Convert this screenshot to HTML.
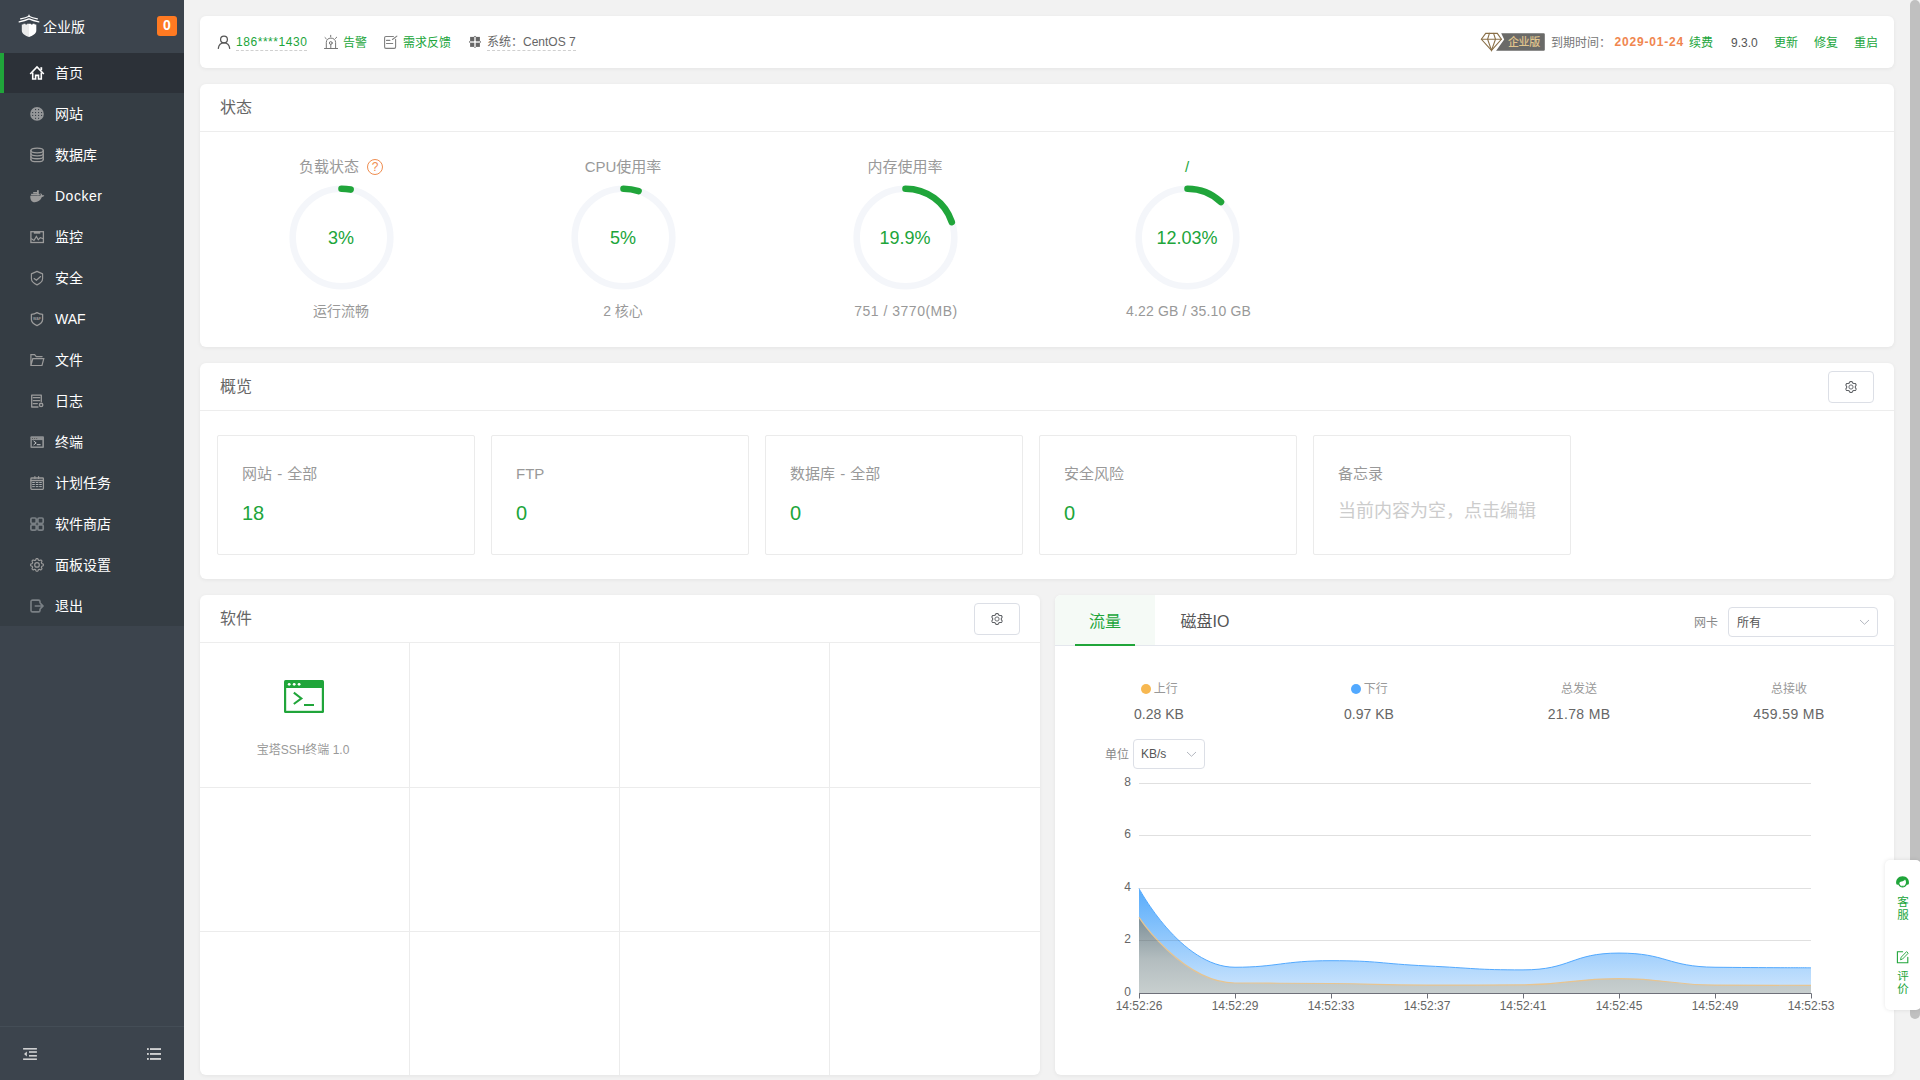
<!DOCTYPE html>
<html lang="zh-CN">
<head>
<meta charset="utf-8">
<title>宝塔Linux面板</title>
<style>
*{box-sizing:border-box;margin:0;padding:0}
html,body{width:1920px;height:1080px;overflow:hidden;background:#f2f2f2;font-family:"Liberation Sans","Noto Sans CJK SC",sans-serif;font-size:12px;color:#666}
#app{position:relative;width:1920px;height:1080px;overflow:hidden}
.abs{position:absolute}
a{color:#20a53a;text-decoration:none}
/* sidebar */
#side{position:absolute;left:0;top:0;width:184px;height:1080px;background:#3c444d}
#side .menu{position:absolute;left:0;top:53px;width:184px;height:573px;background:#353d44}
#side .item{position:absolute;left:0;width:184px;height:40px;line-height:40px;color:#fff;font-size:14px;padding-left:55px;white-space:nowrap}
#side .item.on{background:#2c3138;border-left:4px solid #20a53a;padding-left:51px}
#side .item svg{position:absolute;left:29px;top:12px;width:16px;height:16px}
#side .item.on svg{left:25px}
#side .logo{position:absolute;left:43px;top:17px;font-size:14px;color:#fff;line-height:20px}
#side .badge{position:absolute;left:157px;top:16px;width:20px;height:20px;border-radius:3px;background:#ff7a22;color:#fff;font-weight:bold;font-size:14px;line-height:19px;text-align:center}
#side .sep{position:absolute;left:0;top:1026px;width:184px;height:1px;background:#444d56}
/* cards */
.card{position:absolute;background:#fff;border-radius:6px;box-shadow:0 1px 4px rgba(0,0,0,.06)}
.card .hd{position:absolute;left:0;top:0;right:0;height:48px;border-bottom:1px solid #ededed}
.card .hd .t{position:absolute;left:20px;top:0;line-height:48.5px;font-size:16px;color:#666}
.gearbtn{position:absolute;right:20px;top:8px;width:46px;height:32px;border:1px solid #dcdfe6;border-radius:4px;background:#fff}
.gearbtn svg{position:absolute;left:16px;top:9px;width:12px;height:12px}
/* top bar */
#top{left:200px;top:16px;width:1694px;height:52px}
#top span,#top a{position:absolute;top:18px;line-height:16px;font-size:12px;white-space:nowrap}
.dash{border-bottom:1px dashed #d0d0d0;padding-bottom:0}
#top .c{top:19px}
/* status */
.st-t{position:absolute;top:73px;width:200px;text-align:center;font-size:15px;line-height:20px;color:#999;white-space:nowrap}
.st-v{position:absolute;top:142px;width:200px;text-align:center;font-size:18px;line-height:24px;color:#20a53a;white-space:nowrap}
.st-b{position:absolute;top:217px;width:240px;text-align:center;font-size:14px;line-height:20px;color:#999;white-space:nowrap}
/* overview */
.ov{position:absolute;top:72px;width:258px;height:120px;border:1px solid #ebebeb;border-radius:2px;background:#fff}
.ov .l{position:absolute;left:24px;top:28px;font-size:15px;line-height:20px;color:#999;white-space:nowrap;word-spacing:1px}
.ov .n{position:absolute;left:24px;top:64px;font-size:20px;line-height:26px;color:#20a53a}
/* software grid */
.gl{position:absolute;background:#ececec}
/* chart */
.tab{position:absolute;top:0;width:100px;height:50px;line-height:54px;text-align:center;font-size:16px;color:#555}
.tab.on{background:#f5faf6;color:#20a53a}
.sel{position:absolute;border:1px solid #dcdfe6;border-radius:4px;background:#fff;font-size:12px;color:#555}
.kv-l{position:absolute;top:86px;width:210px;text-align:center;font-size:12px;line-height:16px;color:#999;white-space:nowrap}
.kv-v{position:absolute;top:108.5px;width:210px;text-align:center;font-size:14px;line-height:20px;color:#666;white-space:nowrap}
.dot{display:inline-block;width:10px;height:10px;border-radius:50%;vertical-align:-1px;margin-left:1px;margin-right:2.5px}
</style>
</head>
<body>
<div id="app">

<!-- SIDEBAR -->
<div id="side">
  <div class="logo">企业版</div>
  <div class="badge">0</div>
  <div class="menu"></div>
  <div class="item on" style="top:53px">首页</div>
  <div class="item" style="top:94px">网站</div>
  <div class="item" style="top:135px">数据库</div>
  <div class="item" style="top:176px;letter-spacing:0.5px">Docker</div>
  <div class="item" style="top:217px">监控</div>
  <div class="item" style="top:258px">安全</div>
  <div class="item" style="top:299px">WAF</div>
  <div class="item" style="top:340px">文件</div>
  <div class="item" style="top:381px">日志</div>
  <div class="item" style="top:422px">终端</div>
  <div class="item" style="top:463px">计划任务</div>
  <div class="item" style="top:504px">软件商店</div>
  <div class="item" style="top:545px">面板设置</div>
  <div class="item" style="top:586px">退出</div>
  <div class="sep"></div>
  <svg class="abs" style="left:0;top:0" width="184" height="1080" viewBox="0 0 184 1080" fill="none" stroke-linecap="round" stroke-linejoin="round">
<g><path d="M21.8,24.6 h1.6 v-0.9 h2 v0.9 h1.7 v-0.9 h1.9 v13.3 C25.5,35.8 21.8,34 21.8,30.5 Z" fill="#ebebeb"/><path d="M29,23.7 h1.9 v0.9 h1.7 v-0.9 h2 v0.9 h1.7 V30.5 C36.3,34 32.5,35.8 29,37 Z" fill="#fff"/><path d="M19.2,21.9 C22,21.3 26,20.2 29,18.9 C32,20.2 36,21.3 38.8,21.9" stroke="#fff" stroke-width="1.3"/><path d="M20.6,18.8 C23,18.3 26.5,17.4 29,16.2 C31.5,17.4 35,18.3 37.4,18.8" stroke="#fff" stroke-width="1.2"/><path d="M29,15 V16.6" stroke="#fff" stroke-width="1.2"/></g>
<g stroke="#fff" stroke-width="1.6" stroke-linejoin="miter" stroke-linecap="butt"><path d="M30.2,74 L37,66.9 L43.8,74"/><path d="M32.7,72.6 V79 H35.6 V75.4 H38.5 V79 H41.3 V72.6"/><path d="M41.3,67.2 V70.2" stroke-width="1.8"/></g>
<circle cx="37" cy="113.9" r="6.8" fill="#959799"/><rect x="32.1" y="112.0" width="1.1" height="1.1" fill="#3a4249"/><rect x="32.1" y="114.9" width="1.1" height="1.1" fill="#3a4249"/><rect x="35.0" y="109.0" width="1.1" height="1.1" fill="#3a4249"/><rect x="35.0" y="112.0" width="1.1" height="1.1" fill="#3a4249"/><rect x="35.0" y="114.9" width="1.1" height="1.1" fill="#3a4249"/><rect x="35.0" y="117.8" width="1.1" height="1.1" fill="#3a4249"/><rect x="38.0" y="109.0" width="1.1" height="1.1" fill="#3a4249"/><rect x="38.0" y="112.0" width="1.1" height="1.1" fill="#3a4249"/><rect x="38.0" y="114.9" width="1.1" height="1.1" fill="#3a4249"/><rect x="38.0" y="117.8" width="1.1" height="1.1" fill="#3a4249"/><rect x="41.0" y="112.0" width="1.1" height="1.1" fill="#3a4249"/><rect x="41.0" y="114.9" width="1.1" height="1.1" fill="#3a4249"/>
<g stroke="#9b9b9b" stroke-width="1.3"><ellipse cx="37.1" cy="150.5" rx="6.2" ry="2.3"/><path d="M30.9,150.5 V159.4 M43.3,150.5 V159.4"/><path d="M30.9,153.6 C30.9,156.6 43.3,156.6 43.3,153.6"/><path d="M30.9,156.5 C30.9,159.5 43.3,159.5 43.3,156.5"/><path d="M30.9,159.4 C30.9,162.4 43.3,162.4 43.3,159.4"/></g>
<g fill="#9b9b9b"><path d="M30.3,195.7 H40.4 C40.9,194.6 40.6,193.8 40.2,193.1 C41.6,193.6 42.2,194.6 42.3,195.3 C43,195 43.8,195.2 44.3,195.6 C43.7,196.8 42.7,197.1 41.9,197 C40.6,200.2 38,202.2 34.8,202.2 C31.5,202.2 30.1,199.6 30.3,195.7 Z"/><rect x="31.1" y="193.8" width="8.6" height="1.5"/><rect x="33.2" y="192" width="4" height="1.6"/><rect x="37" y="190.2" width="1.8" height="5"/></g>
<g stroke="#9b9b9b" stroke-width="1.3" stroke-linejoin="miter"><rect x="30.9" y="231.7" width="12.5" height="10.8"/><path d="M33.8,232.8 H40.3" stroke-width="1.8" stroke-linecap="butt"/><path d="M31.5,238.8 L34,240.4 L36.4,236.4 L38.3,239.8 L40.2,237.7 L42.8,238.6" stroke-width="1.1"/></g>
<g stroke="#9b9b9b" stroke-width="1.15"><path d="M37,271.4 L42.6,273.9 V278.6 C42.6,281.6 40,283.6 37,284.9 C34,283.6 31.4,281.6 31.4,278.6 V273.9 Z"/><path d="M34.1,278.5 L36.4,280.3 L40.6,276.5"/></g>
<g stroke="#9b9b9b" stroke-width="1.3"><path d="M37,312.6 C38.8,313.6 40.6,314.2 42.6,314.4 V319.6 C42.6,322.6 40,324.4 37,325.6 C34,324.4 31.4,322.6 31.4,319.6 V314.4 C33.4,314.2 35.2,313.6 37,312.6 Z"/></g><text x="37" y="320" text-anchor="middle" font-family="Liberation Sans, sans-serif" font-weight="bold" font-size="3.6" fill="#9b9b9b">WAF</text>
<g stroke="#9b9b9b" stroke-width="1.2" stroke-linejoin="miter"><path d="M42.1,356.6 H36.3 L34.6,354.6 H30.9 V365.5 H42 L43.8,358.6 H32.8 L31,365.3"/></g>
<g stroke="#9b9b9b" stroke-width="1.3"><path d="M41.3,401.6 V395.2 H31.7 V407 H38"/><path d="M33.2,397.6 H39.8 M33.2,400.6 H39.8 M33.2,403.6 H37.4" stroke-width="1.2"/><circle cx="41.1" cy="404.9" r="1.7" stroke-width="1.4"/></g>
<g><rect x="30.4" y="436.3" width="13.6" height="11.7" rx="1" fill="#8d9092"/><rect x="31.9" y="440.1" width="10.4" height="6.3" fill="#353d44"/><rect x="32" y="438" width="1" height="0.9" fill="#555"/><rect x="34.1" y="438" width="1" height="0.9" fill="#555"/><rect x="36.2" y="438" width="1" height="0.9" fill="#555"/><path d="M33.9,441.2 L36.2,442.9 L33.9,444.7" stroke="#c5c7c8" stroke-width="1"/><path d="M37.2,444.7 H40.2" stroke="#c5c7c8" stroke-width="1"/></g>
<g stroke="#9b9b9b" stroke-width="1.3"><rect x="30.9" y="478" width="12.5" height="11.4" rx="0.8"/><path d="M30.9,480.5 H43.4"/><path d="M34.9,476.6 V478.4 M38.6,476.6 V478.4" stroke-width="1.2"/></g><rect x="32.2" y="482.1" width="2.6" height="0.9" fill="#b4b6b8"/><rect x="32.2" y="484.1" width="2.6" height="0.9" fill="#b4b6b8"/><rect x="32.2" y="486.2" width="2.6" height="0.9" fill="#b4b6b8"/><rect x="35.8" y="482.1" width="2.6" height="0.9" fill="#b4b6b8"/><rect x="35.8" y="484.1" width="2.6" height="0.9" fill="#b4b6b8"/><rect x="35.8" y="486.2" width="2.6" height="0.9" fill="#b4b6b8"/><rect x="39.2" y="482.1" width="2.6" height="0.9" fill="#b4b6b8"/><rect x="39.2" y="484.1" width="2.6" height="0.9" fill="#b4b6b8"/><rect x="39.2" y="486.2" width="2.6" height="0.9" fill="#b4b6b8"/>
<g stroke="#7a8085" stroke-width="1.7"><rect x="30.9" y="518" width="5.3" height="5.3" rx="1.2"/><rect x="37.9" y="518" width="5.3" height="5.3" rx="1.2"/><rect x="30.9" y="524.9" width="5.3" height="5.3" rx="1.2"/><rect x="37.9" y="524.9" width="5.3" height="5.3" rx="1.2"/></g>
<path d="M37.00,558.55 L37.42,558.56 L37.81,558.74 L38.10,559.36 L38.32,559.98 L38.59,560.21 L38.89,560.33 L39.19,560.46 L39.55,560.49 L40.14,560.20 L40.78,559.97 L41.19,560.13 L41.49,560.41 L41.77,560.71 L41.93,561.12 L41.70,561.76 L41.41,562.36 L41.44,562.71 L41.57,563.01 L41.69,563.31 L41.92,563.58 L42.54,563.80 L43.16,564.09 L43.34,564.48 L43.35,564.90 L43.34,565.32 L43.16,565.71 L42.54,566.00 L41.92,566.22 L41.69,566.49 L41.57,566.79 L41.44,567.09 L41.41,567.44 L41.70,568.04 L41.93,568.68 L41.77,569.09 L41.49,569.39 L41.19,569.67 L40.78,569.83 L40.14,569.60 L39.55,569.31 L39.19,569.34 L38.89,569.47 L38.59,569.59 L38.32,569.82 L38.10,570.44 L37.81,571.06 L37.42,571.24 L37.00,571.25 L36.58,571.24 L36.19,571.06 L35.90,570.44 L35.68,569.82 L35.41,569.59 L35.11,569.47 L34.81,569.34 L34.46,569.31 L33.86,569.60 L33.22,569.83 L32.81,569.67 L32.51,569.39 L32.23,569.09 L32.07,568.68 L32.30,568.04 L32.59,567.44 L32.56,567.09 L32.43,566.79 L32.31,566.49 L32.08,566.22 L31.46,566.00 L30.84,565.71 L30.66,565.32 L30.65,564.90 L30.66,564.48 L30.84,564.09 L31.46,563.80 L32.08,563.58 L32.31,563.31 L32.43,563.01 L32.56,562.71 L32.59,562.36 L32.30,561.76 L32.07,561.12 L32.23,560.71 L32.51,560.41 L32.81,560.13 L33.22,559.97 L33.86,560.20 L34.45,560.49 L34.81,560.46 L35.11,560.33 L35.41,560.21 L35.68,559.98 L35.90,559.36 L36.19,558.74 L36.58,558.56Z" stroke="#9b9b9b" stroke-width="1.2"/><circle cx="37" cy="564.9" r="2.3" stroke="#9b9b9b" stroke-width="1.2"/>
<g stroke="#7a8085" stroke-width="1.6"><path d="M40,602.4 V601.6 C40,600.6 39.4,600.1 38.4,600.1 H32.6 C31.6,600.1 31,600.7 31,601.6 V610.4 C31,611.4 31.6,611.9 32.6,611.9 H38.4 C39.4,611.9 40,611.4 40,610.4 V609.6"/><path d="M35.3,606 H42.6 M40.4,603.4 L43.1,606 L40.4,608.6"/></g>
<g fill="#cfd0d1"><rect x="23.1" y="1048" width="13.8" height="1.6"/><rect x="29" y="1051.2" width="7.9" height="1.6"/><rect x="29" y="1055" width="7.9" height="1.6"/><rect x="23.1" y="1058.4" width="13.8" height="1.6"/><path d="M24,1054 L26.9,1051.6 V1056.4 Z"/><rect x="147" y="1048.1" width="1.8" height="1.9"/><rect x="150" y="1048.1" width="11" height="1.9"/><rect x="147" y="1053" width="1.8" height="1.9"/><rect x="150" y="1053" width="11" height="1.9"/><rect x="147" y="1058" width="1.8" height="1.9"/><rect x="150" y="1058" width="11" height="1.9"/></g>
</svg>
</div>

<!-- TOP BAR -->
<div class="card" id="top">
  <svg class="abs" style="left:0;top:0" width="1694" height="52" viewBox="200 16 1694 52" fill="none" stroke-linecap="round" stroke-linejoin="round">
    <g stroke="#555" stroke-width="1.25">
      <circle cx="224" cy="39.4" r="3.4"/>
      <path d="M218.3,48.4 C218.8,44.6 221,42.9 224,42.9 C227,42.9 229.2,44.6 229.7,48.4"/>
    </g>
    <g stroke="#777" stroke-width="1">
      <path d="M326.3,48.5 V42.4 C326.3,39.8 328.3,38.1 330.9,38.1 C333.5,38.1 335.6,39.8 335.6,42.4 V48.5"/>
      <path d="M324.5,48.5 H337.6"/>
      <path d="M330.7,35.3 V36.8 M325,37.6 L326.3,38.8 M336.7,37.2 L335.4,38.5"/>
      <circle cx="330.8" cy="43" r="1.4"/>
      <path d="M330.8,44.4 V48.3"/>
    </g>
    <g stroke="#808080" stroke-width="1.1">
      <path d="M393.4,36.5 H385.9 C385,36.5 384.6,37 384.6,37.8 V47.1 C384.6,47.9 385,48.4 385.9,48.4 H394.3 C395.2,48.4 395.6,47.9 395.6,47.1 V39.4"/>
      <path d="M392.4,39.5 L396.9,36.1"/>
      <path d="M386.5,40.4 H389.9 M386.5,43.5 H392.7"/>
    </g>
    <g fill="#666" stroke="none">
      <rect x="470.1" y="36.9" width="4.1" height="4.1"/><rect x="475.8" y="36.9" width="4.1" height="4.1"/>
      <rect x="470.1" y="42.8" width="4.1" height="4.1"/><rect x="475.8" y="42.8" width="4.1" height="4.1"/>
      <path d="M475,35.7 L476.3,37 H473.7 Z M475,48.1 L476.3,46.8 H473.7 Z M468.9,41.9 L470.2,40.6 V43.2 Z M481.1,41.9 L479.8,40.6 V43.2 Z"/>
      <rect x="474.2" y="36.9" width="1.6" height="10" fill="#c9c9c9"/><rect x="470.1" y="41" width="9.8" height="1.8" fill="#c9c9c9"/>
      <rect x="474.2" y="41" width="1.6" height="1.8" fill="#fff"/>
    </g>
    <g stroke="#8a7048" stroke-width="1.1" stroke-linejoin="miter">
      <path d="M1485.7,33.4 H1497.3 L1501.4,39.3 L1491.5,50.4 L1481.4,39.3 Z"/>
      <path d="M1481.4,39.3 H1501.4"/>
      <path d="M1489.4,33.4 L1487.6,39.3 L1491.5,50.4 L1495.5,39.3 L1493.6,33.4"/>
    </g>
    <path d="M1501.2,33.2 H1543.8 Q1544.8,33.2 1544.8,34.2 V49.8 Q1544.8,50.8 1543.8,50.8 H1496.1 L1504.2,39.4 Z" fill="#6a6a68"/>
  </svg>
  <a class="dash" style="left:36px;letter-spacing:0.55px">186****1430</a>
  <a class="c" style="left:143px">告警</a>
  <a class="c" style="left:203px">需求反馈</a>
  <span class="dash" style="left:287px;color:#666">系统：CentOS 7</span>
  <span style="left:1308px;top:18px;font-size:11px;font-weight:500;color:#e0c48c;letter-spacing:-0.4px">企业版</span>
  <span class="c" style="left:1351px;color:#777">到期时间：</span>
  <span style="left:1414.5px;top:18px;color:#f0864f;font-weight:bold;font-size:12px;letter-spacing:0.8px">2029-01-24</span>
  <a class="c" style="left:1489px">续费</a>
  <span class="c" style="left:1531px;color:#555">9.3.0</span>
  <a class="c" style="left:1574px">更新</a>
  <a class="c" style="left:1614px">修复</a>
  <a class="c" style="left:1654px">重启</a>
</div>

<!-- STATUS -->
<div class="card" style="left:200px;top:84px;width:1694px;height:263px">
  <div class="hd"><div class="t">状态</div></div>
  <svg class="abs" style="left:0;top:0" width="1694" height="263" viewBox="0 0 1694 263"><circle cx="141.5" cy="153.5" r="48.8" fill="none" stroke="#f4f6fa" stroke-width="6.6"/><path d="M141.50,104.70 A48.8,48.8 0 0 1 150.64,105.56" fill="none" stroke="#20a53a" stroke-width="6.6" stroke-linecap="round"/><circle cx="423.5" cy="153.5" r="48.8" fill="none" stroke="#f4f6fa" stroke-width="6.6"/><path d="M423.50,104.70 A48.8,48.8 0 0 1 438.58,107.09" fill="none" stroke="#20a53a" stroke-width="6.6" stroke-linecap="round"/><circle cx="705.5" cy="153.5" r="48.8" fill="none" stroke="#f4f6fa" stroke-width="6.6"/><path d="M705.50,104.70 A48.8,48.8 0 0 1 751.82,138.13" fill="none" stroke="#20a53a" stroke-width="6.6" stroke-linecap="round"/><circle cx="987.5" cy="153.5" r="48.8" fill="none" stroke="#f4f6fa" stroke-width="6.6"/><path d="M987.50,104.70 A48.8,48.8 0 0 1 1020.97,117.99" fill="none" stroke="#20a53a" stroke-width="6.6" stroke-linecap="round"/>
    <circle cx="175" cy="83" r="7.5" fill="none" stroke="#ef8d50" stroke-width="1"/>
  </svg>
  <div class="st-t" style="left:29px;width:200px;text-align:left;padding-left:70px">负载状态</div>
  <div class="abs" style="left:167px;top:74px;width:16px;height:18px;line-height:18px;text-align:center;font-size:12px;color:#ef8d50">?</div>
  <div class="st-t" style="left:323px">CPU使用率</div>
  <div class="st-t" style="left:605px">内存使用率</div>
  <div class="st-t" style="left:887px;color:#20a53a">/</div>
  <div class="st-v" style="left:41px">3%</div>
  <div class="st-v" style="left:323px">5%</div>
  <div class="st-v" style="left:605px">19.9%</div>
  <div class="st-v" style="left:887px">12.03%</div>
  <div class="st-b" style="left:21px">运行流畅</div>
  <div class="st-b" style="left:303px">2 核心</div>
  <div class="st-b" style="left:586px;letter-spacing:0.5px">751 / 3770(MB)</div>
  <div class="st-b" style="left:868.5px;letter-spacing:0.15px">4.22 GB / 35.10 GB</div>

</div>

<!-- OVERVIEW -->
<div class="card" style="left:200px;top:363px;width:1694px;height:216px">
  <div class="hd"><div class="t">概览</div><div class="gearbtn"><svg viewBox="0 0 12 12" fill="none"><path d="M6.00,0.45 L6.36,0.46 L6.72,0.50 L7.04,0.78 L7.28,1.22 L7.47,1.66 L7.66,1.98 L7.92,2.10 L8.18,2.23 L8.42,2.38 L8.65,2.55 L9.02,2.55 L9.50,2.50 L10.00,2.49 L10.40,2.62 L10.61,2.92 L10.81,3.22 L10.98,3.55 L11.13,3.88 L11.04,4.29 L10.78,4.72 L10.49,5.11 L10.31,5.43 L10.34,5.72 L10.35,6.00 L10.34,6.28 L10.31,6.57 L10.49,6.89 L10.78,7.28 L11.04,7.71 L11.13,8.12 L10.98,8.45 L10.81,8.77 L10.61,9.08 L10.40,9.38 L10.00,9.51 L9.50,9.50 L9.02,9.45 L8.65,9.45 L8.42,9.62 L8.18,9.77 L7.92,9.90 L7.66,10.02 L7.47,10.34 L7.28,10.78 L7.04,11.22 L6.72,11.50 L6.36,11.54 L6.00,11.55 L5.64,11.54 L5.28,11.50 L4.96,11.22 L4.72,10.78 L4.53,10.34 L4.34,10.02 L4.08,9.90 L3.83,9.77 L3.58,9.62 L3.35,9.45 L2.98,9.45 L2.50,9.50 L2.00,9.51 L1.60,9.38 L1.39,9.08 L1.19,8.78 L1.02,8.45 L0.87,8.12 L0.96,7.71 L1.22,7.28 L1.51,6.89 L1.69,6.57 L1.66,6.28 L1.65,6.00 L1.66,5.72 L1.69,5.43 L1.51,5.11 L1.22,4.72 L0.96,4.29 L0.87,3.88 L1.02,3.55 L1.19,3.22 L1.39,2.92 L1.60,2.62 L2.00,2.49 L2.50,2.50 L2.98,2.55 L3.35,2.55 L3.58,2.38 L3.82,2.23 L4.08,2.10 L4.34,1.98 L4.53,1.66 L4.72,1.22 L4.96,0.78 L5.28,0.50 L5.64,0.46Z" stroke="#5f6266" stroke-width="1.1" stroke-linejoin="round"/><circle cx="6" cy="6" r="2.1" stroke="#6a6d72" stroke-width="1"/></svg></div></div>
  <div class="ov" style="left:17px"><div class="l">网站 - 全部</div><div class="n">18</div></div>
  <div class="ov" style="left:291px"><div class="l">FTP</div><div class="n">0</div></div>
  <div class="ov" style="left:565px"><div class="l">数据库 - 全部</div><div class="n">0</div></div>
  <div class="ov" style="left:839px"><div class="l">安全风险</div><div class="n">0</div></div>
  <div class="ov" style="left:1113px"><div class="l">备忘录</div><div class="n" style="font-size:18px;color:#ccc;top:62px;white-space:nowrap">当前内容为空，点击编辑</div></div>

</div>

<!-- SOFTWARE -->
<div class="card" style="left:200px;top:595px;width:840px;height:480px">
  <div class="hd"><div class="t">软件</div><div class="gearbtn"><svg viewBox="0 0 12 12" fill="none"><path d="M6.00,0.45 L6.36,0.46 L6.72,0.50 L7.04,0.78 L7.28,1.22 L7.47,1.66 L7.66,1.98 L7.92,2.10 L8.18,2.23 L8.42,2.38 L8.65,2.55 L9.02,2.55 L9.50,2.50 L10.00,2.49 L10.40,2.62 L10.61,2.92 L10.81,3.22 L10.98,3.55 L11.13,3.88 L11.04,4.29 L10.78,4.72 L10.49,5.11 L10.31,5.43 L10.34,5.72 L10.35,6.00 L10.34,6.28 L10.31,6.57 L10.49,6.89 L10.78,7.28 L11.04,7.71 L11.13,8.12 L10.98,8.45 L10.81,8.77 L10.61,9.08 L10.40,9.38 L10.00,9.51 L9.50,9.50 L9.02,9.45 L8.65,9.45 L8.42,9.62 L8.18,9.77 L7.92,9.90 L7.66,10.02 L7.47,10.34 L7.28,10.78 L7.04,11.22 L6.72,11.50 L6.36,11.54 L6.00,11.55 L5.64,11.54 L5.28,11.50 L4.96,11.22 L4.72,10.78 L4.53,10.34 L4.34,10.02 L4.08,9.90 L3.83,9.77 L3.58,9.62 L3.35,9.45 L2.98,9.45 L2.50,9.50 L2.00,9.51 L1.60,9.38 L1.39,9.08 L1.19,8.78 L1.02,8.45 L0.87,8.12 L0.96,7.71 L1.22,7.28 L1.51,6.89 L1.69,6.57 L1.66,6.28 L1.65,6.00 L1.66,5.72 L1.69,5.43 L1.51,5.11 L1.22,4.72 L0.96,4.29 L0.87,3.88 L1.02,3.55 L1.19,3.22 L1.39,2.92 L1.60,2.62 L2.00,2.49 L2.50,2.50 L2.98,2.55 L3.35,2.55 L3.58,2.38 L3.82,2.23 L4.08,2.10 L4.34,1.98 L4.53,1.66 L4.72,1.22 L4.96,0.78 L5.28,0.50 L5.64,0.46Z" stroke="#5f6266" stroke-width="1.1" stroke-linejoin="round"/><circle cx="6" cy="6" r="2.1" stroke="#6a6d72" stroke-width="1"/></svg></div></div>
  <div class="gl" style="left:209px;top:48px;width:1px;height:432px"></div>
  <div class="gl" style="left:419px;top:48px;width:1px;height:432px"></div>
  <div class="gl" style="left:629px;top:48px;width:1px;height:432px"></div>
  <div class="gl" style="left:0;top:192px;width:840px;height:1px"></div>
  <div class="gl" style="left:0;top:336px;width:840px;height:1px"></div>
  <svg class="abs" style="left:84px;top:85px" width="40" height="33" viewBox="0 0 40 33">
    <rect x="0" y="0" width="40" height="33" rx="1.5" fill="#20a53a"/>
    <rect x="2.2" y="8" width="35.6" height="22.8" fill="#fff"/>
    <circle cx="5.2" cy="4.3" r="1.4" fill="#fff"/><circle cx="10.2" cy="4.3" r="1.4" fill="#fff"/><circle cx="15.1" cy="4.3" r="1.4" fill="#fff"/>
    <path d="M9.8,12.6 L17.4,18.4 L9.8,24" fill="none" stroke="#20a53a" stroke-width="2"/>
    <path d="M20,25 H30" stroke="#20a53a" stroke-width="2"/>
  </svg>
  <div class="abs" style="left:-3px;top:147px;width:212px;text-align:center;font-size:12px;line-height:16px;color:#999;white-space:nowrap">宝塔SSH终端 1.0</div>

</div>

<!-- CHART -->
<div class="card" style="left:1055px;top:595px;width:839px;height:480px">
  <div class="tab on" style="left:0;border-top-left-radius:6px">流量</div>
  <div class="tab" style="left:100px">磁盘IO</div>
  <div class="abs" style="left:0;top:50px;width:839px;height:1px;background:#e4e7ed"></div>
  <div class="abs" style="left:20px;top:49px;width:60px;height:2px;background:#20a53a"></div>
  <div class="abs" style="left:639px;top:20px;font-size:12px;line-height:16px;color:#888">网卡</div>
  <div class="sel" style="left:673px;top:12px;width:150px;height:30px;line-height:30px;padding-left:8px">所有
    <svg class="abs" style="left:130px;top:11px" width="11" height="7" viewBox="0 0 11 7"><path d="M1,1 L5.5,5.3 L10,1" fill="none" stroke="#b4b8c0" stroke-width="1"/></svg>
  </div>
  <div class="kv-l" style="left:-1px"><i class="dot" style="background:#f7b851"></i>上行</div>
  <div class="kv-l" style="left:209px"><i class="dot" style="background:#52a9ff"></i>下行</div>
  <div class="kv-l" style="left:419px">总发送</div>
  <div class="kv-l" style="left:629px">总接收</div>
  <div class="kv-v" style="left:-1px">0.28 KB</div>
  <div class="kv-v" style="left:209px">0.97 KB</div>
  <div class="kv-v" style="left:419px;letter-spacing:0.35px">21.78 MB</div>
  <div class="kv-v" style="left:629px;letter-spacing:0.4px">459.59 MB</div>
  <div class="abs" style="left:50px;top:152px;font-size:12px;line-height:16px;color:#888">单位</div>
  <div class="sel" style="left:78px;top:144px;width:72px;height:30px;line-height:28px;padding-left:7px">KB/s
    <svg class="abs" style="left:52px;top:11px" width="11" height="7" viewBox="0 0 11 7"><path d="M1,1 L5.5,5.3 L10,1" fill="none" stroke="#b4b8c0" stroke-width="1"/></svg>
  </div>
  <svg class="abs" style="left:0;top:0" width="839" height="480" viewBox="0 0 839 480">
<defs><linearGradient id="gb" x1="0" y1="0" x2="0" y2="1"><stop offset="0" stop-color="#58acfb"/><stop offset="1" stop-color="#cfe6fd"/></linearGradient><linearGradient id="go" x1="0" y1="0" x2="0" y2="1"><stop offset="0" stop-color="#7d8f98"/><stop offset="0.55" stop-color="#b3bdbf"/><stop offset="1" stop-color="#c8cfcf"/></linearGradient></defs>
<line x1="84.0" x2="756.0" y1="345.5" y2="345.5" stroke="#e0e0e0" stroke-width="1"/>
<line x1="84.0" x2="756.0" y1="293.5" y2="293.5" stroke="#e0e0e0" stroke-width="1"/>
<line x1="84.0" x2="756.0" y1="240.5" y2="240.5" stroke="#e0e0e0" stroke-width="1"/>
<line x1="84.0" x2="756.0" y1="188.5" y2="188.5" stroke="#e0e0e0" stroke-width="1"/>
<path d="M84.00,293.50 C84.00,293.50 125.91,372.25 180.00,372.25 C221.91,372.25 227.98,365.69 276.00,365.69 C323.98,365.69 323.98,368.64 372.00,370.94 C419.98,373.23 420.34,374.88 468.00,374.88 C516.34,374.88 515.90,358.07 564.00,358.07 C611.90,358.07 611.74,371.72 660.00,372.25 C707.74,372.77 756.00,372.77 756.00,372.77 L756.00,398.50 L84.00,398.50 Z" fill="url(#gb)"/>
<path d="M84.00,293.50 C84.00,293.50 125.91,372.25 180.00,372.25 C221.91,372.25 227.98,365.69 276.00,365.69 C323.98,365.69 323.98,368.64 372.00,370.94 C419.98,373.23 420.34,374.88 468.00,374.88 C516.34,374.88 515.90,358.07 564.00,358.07 C611.90,358.07 611.74,371.72 660.00,372.25 C707.74,372.77 756.00,372.77 756.00,372.77" fill="none" stroke="#52a9ff" stroke-width="1"/>
<path d="M84.00,322.38 C84.00,322.38 127.41,387.36 180.00,388.00 C223.41,388.52 228.00,388.00 276.00,388.52 C324.00,389.05 324.00,390.10 372.00,390.10 C420.00,390.10 420.05,390.10 468.00,389.84 C516.05,389.57 516.00,383.54 564.00,383.54 C612.00,383.54 611.94,389.84 660.00,390.10 C707.94,390.36 756.00,390.36 756.00,390.36 L756.00,398.50 L84.00,398.50 Z" fill="url(#go)"/>
<path d="M84.00,322.38 C84.00,322.38 127.41,387.36 180.00,388.00 C223.41,388.52 228.00,388.00 276.00,388.52 C324.00,389.05 324.00,390.10 372.00,390.10 C420.00,390.10 420.05,390.10 468.00,389.84 C516.05,389.57 516.00,383.54 564.00,383.54 C612.00,383.54 611.94,389.84 660.00,390.10 C707.94,390.36 756.00,390.36 756.00,390.36" fill="none" stroke="#e8c48f" stroke-width="1.2"/>
<line x1="84.0" x2="135.0" y1="345.5" y2="345.5" stroke="#000" stroke-opacity="0.09" stroke-width="1"/>
<line x1="84.0" x2="756.5" y1="398.5" y2="398.5" stroke="#6e7079" stroke-width="1"/>
<line x1="84.5" x2="84.5" y1="398.5" y2="403.5" stroke="#6e7079" stroke-width="1"/>
<line x1="180.5" x2="180.5" y1="398.5" y2="403.5" stroke="#6e7079" stroke-width="1"/>
<line x1="276.5" x2="276.5" y1="398.5" y2="403.5" stroke="#6e7079" stroke-width="1"/>
<line x1="372.5" x2="372.5" y1="398.5" y2="403.5" stroke="#6e7079" stroke-width="1"/>
<line x1="468.5" x2="468.5" y1="398.5" y2="403.5" stroke="#6e7079" stroke-width="1"/>
<line x1="564.5" x2="564.5" y1="398.5" y2="403.5" stroke="#6e7079" stroke-width="1"/>
<line x1="660.5" x2="660.5" y1="398.5" y2="403.5" stroke="#6e7079" stroke-width="1"/>
<line x1="756.5" x2="756.5" y1="398.5" y2="403.5" stroke="#6e7079" stroke-width="1"/>
<g font-family="Liberation Sans, sans-serif" font-size="12" fill="#666">
<text x="84.0" y="414.5" text-anchor="middle">14:52:26</text>
<text x="180.0" y="414.5" text-anchor="middle">14:52:29</text>
<text x="276.0" y="414.5" text-anchor="middle">14:52:33</text>
<text x="372.0" y="414.5" text-anchor="middle">14:52:37</text>
<text x="468.0" y="414.5" text-anchor="middle">14:52:41</text>
<text x="564.0" y="414.5" text-anchor="middle">14:52:45</text>
<text x="660.0" y="414.5" text-anchor="middle">14:52:49</text>
<text x="756.0" y="414.5" text-anchor="middle">14:52:53</text>
<text x="76.0" y="401.0" text-anchor="end">0</text>
<text x="76.0" y="348.0" text-anchor="end">2</text>
<text x="76.0" y="296.0" text-anchor="end">4</text>
<text x="76.0" y="243.0" text-anchor="end">6</text>
<text x="76.0" y="191.0" text-anchor="end">8</text>
</g></svg>
</div>

<!-- SCROLLBAR -->
<div class="abs" style="left:1910px;top:0;width:10px;height:1019px;background:#c0c0c0;border-radius:5px"></div>
<!-- FLOAT WIDGET -->
<div class="abs" style="left:1885px;top:860px;width:36px;height:150px;background:#fff;border-radius:5px;box-shadow:0 0 4px rgba(0,0,0,.1)">
  <svg class="abs" style="left:0;top:0" width="36" height="150" viewBox="1885 860 36 150" fill="none" stroke-linecap="round" stroke-linejoin="round">
    <path d="M1896.2,883.6 C1895.6,879.6 1898.4,876.2 1902.6,876.2 C1906.8,876.2 1909.6,879.6 1908.9,883.6 C1908.6,884.8 1907.6,885 1907,884.6 C1906,886.6 1904.4,887.6 1902.6,887.6 C1900.8,887.6 1899.2,886.6 1898.2,884.6 C1897.6,885 1896.5,884.8 1896.2,883.6 Z" fill="#20a53a"/>
    <path d="M1899.3,883.2 C1899.8,881.4 1901.2,881.8 1902.8,881.2 C1904,880.8 1904.6,880.2 1905,879.6 C1905.8,880.6 1906.2,882 1905.9,883.2 C1905.4,885.2 1904.2,886.4 1902.6,886.4 C1901,886.4 1899.7,885.2 1899.3,883.2 Z" fill="#fff"/>
    <path d="M1902.6,887 L1901.2,885.8 H1904 Z" fill="#20a53a"/>
    <g stroke="#20a53a" stroke-width="1.1" stroke-linejoin="miter">
      <path d="M1902.6,951.8 H1897.4 V962.8 H1907.8 V957.4"/>
      <path d="M1900.6,959.4 L1901.2,957.2 L1906.6,951.6 L1908.2,953.2 L1902.8,958.8 Z" stroke-width="0.9"/>
    </g>
  </svg>
  <div class="abs" style="left:11px;top:35.7px;width:14px;font-size:11.5px;line-height:13.5px;color:#20a53a;text-align:center">客服</div>
  <div class="abs" style="left:11px;top:109.5px;width:14px;font-size:11.5px;line-height:13px;color:#20a53a;text-align:center">评价</div>
</div>

</div>
</body>
</html>
